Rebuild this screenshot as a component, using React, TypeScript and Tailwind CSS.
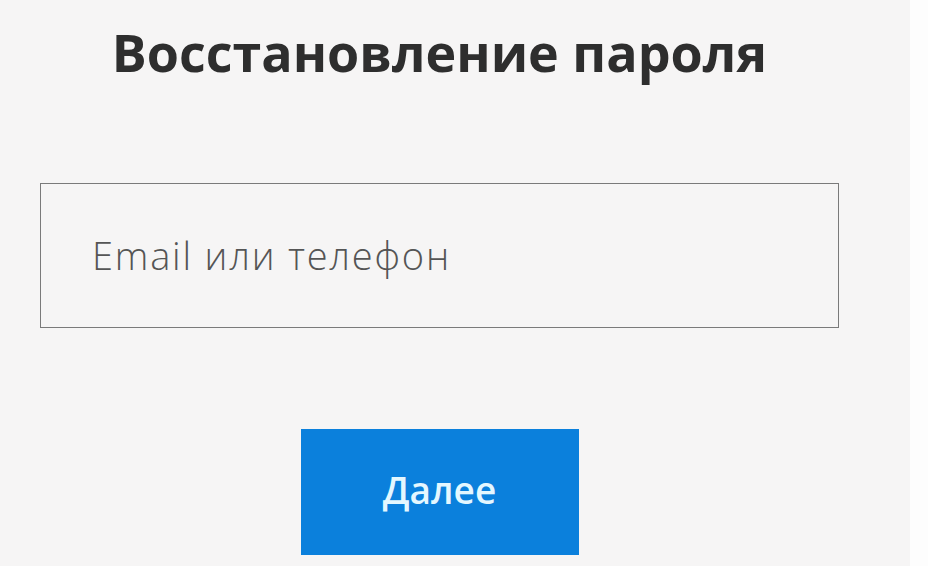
export default function App() {
  return (
    <div className="flex h-[566px] w-[928px] bg-[#fdfdfd]" style={{ fontFamily: '"Open Sans", "Noto Sans", sans-serif' }}>
      <div className="h-full w-[910px] bg-[#f6f5f5] pl-[40px]">
        <div className="flex w-[799px] flex-col items-center">
          <h1 className="mt-[22px] text-[52px] font-bold leading-[60px] text-[#2e2e2e]">Восстановление пароля</h1>
          <div className="mt-[101px] flex h-[145px] w-full items-center border border-[#7a7a7a] pl-[51px]">
            <span className="text-[38px] font-light tracking-[1.8px] text-[#555]">Email или телефон</span>
          </div>
          <button className="mt-[101px] flex h-[126px] w-[278px] items-center justify-center bg-[#0b80dc] pb-[4px] text-[37px] font-semibold text-[#e4f7ff]">
            Далее
          </button>
        </div>
      </div>
    </div>
  )
}
